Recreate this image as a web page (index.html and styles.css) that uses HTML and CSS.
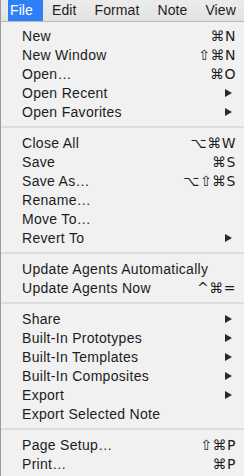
FILE: index.html
```html
<!DOCTYPE html>
<html>
<head>
<meta charset="utf-8">
<link rel="stylesheet" href="styles.css">
</head>
<body>
<div class="screen">
  <div class="menubar">
    <span class="title active">File</span>
    <span class="title">Edit</span>
    <span class="title">Format</span>
    <span class="title">Note</span>
    <span class="title">View</span>
  </div>
  <div class="menu">
    <div class="item"><span>New</span><span class="key">⌘N</span></div>
    <div class="item"><span>New Window</span><span class="key">⇧⌘N</span></div>
    <div class="item"><span>Open…</span><span class="key">⌘O</span></div>
    <div class="item"><span>Open Recent</span><span class="arrow"></span></div>
    <div class="item"><span>Open Favorites</span><span class="arrow"></span></div>
    <div class="sep"></div>
    <div class="item"><span>Close All</span><span class="key">⌥⌘W</span></div>
    <div class="item"><span>Save</span><span class="key">⌘S</span></div>
    <div class="item"><span>Save As…</span><span class="key">⌥⇧⌘S</span></div>
    <div class="item"><span>Rename…</span></div>
    <div class="item"><span>Move To…</span></div>
    <div class="item"><span>Revert To</span><span class="arrow"></span></div>
    <div class="sep"></div>
    <div class="item"><span>Update Agents Automatically</span></div>
    <div class="item"><span>Update Agents Now</span><span class="key">^⌘=</span></div>
    <div class="sep"></div>
    <div class="item"><span>Share</span><span class="arrow"></span></div>
    <div class="item"><span>Built-In Prototypes</span><span class="arrow"></span></div>
    <div class="item"><span>Built-In Templates</span><span class="arrow"></span></div>
    <div class="item"><span>Built-In Composites</span><span class="arrow"></span></div>
    <div class="item"><span>Export</span><span class="arrow"></span></div>
    <div class="item"><span>Export Selected Note</span></div>
    <div class="sep"></div>
    <div class="item"><span>Page Setup…</span><span class="key">⇧⌘P</span></div>
    <div class="item"><span>Print…</span><span class="key">⌘P</span></div>
  </div>
</div>
</body>
</html>
```
FILE: styles.css
```css
* { box-sizing: border-box; }
html, body { margin: 0; padding: 0; }
body {
  width: 244px;
  height: 476px;
  overflow: hidden;
  font-family: "Liberation Sans", Arial, sans-serif;
  font-size: 14px;
  color: #1c1c1c;
  background: #f0f0f0;
}
.screen {
  width: 244px;
  height: 476px;
  display: flex;
  flex-direction: column;
  border-left: 1px solid #9a9a9a;
}
.menubar {
  height: 22px;
  flex: none;
  display: flex;
  align-items: stretch;
  background: linear-gradient(#ececec, #e3e3e3);
  border-bottom: 1px solid #b9b9b9;
  padding-left: 7px;
  letter-spacing: 0.1px;
}
.title {
  display: flex;
  align-items: center;
  padding: 0 9px 1px 9px;
  color: #1e1e1e;
}
.title.active {
  background: #2f80f6;
  color: #fff;
  padding: 0 10px 1px 2px;
}
.menu {
  flex: 1;
  background: #f1f1f1;
  padding-top: 4px;
}
.item {
  height: 19px;
  display: flex;
  align-items: center;
  justify-content: space-between;
  padding: 0 8px 0 21px;
  letter-spacing: 0.3px;
}
.key {
  font-family: "DejaVu Sans", "Liberation Sans", sans-serif;
  font-size: 14px;
  letter-spacing: 0.5px;
}
.arrow {
  width: 0;
  height: 0;
  border-top: 4.5px solid transparent;
  border-bottom: 4.5px solid transparent;
  border-left: 7px solid #2a2a2a;
  margin-right: 4px;
}
.sep {
  height: 12px;
  display: flex;
  align-items: center;
}
.sep::before {
  content: "";
  display: block;
  width: 100%;
  height: 2px;
  background: #dcdcdc;
}
```
